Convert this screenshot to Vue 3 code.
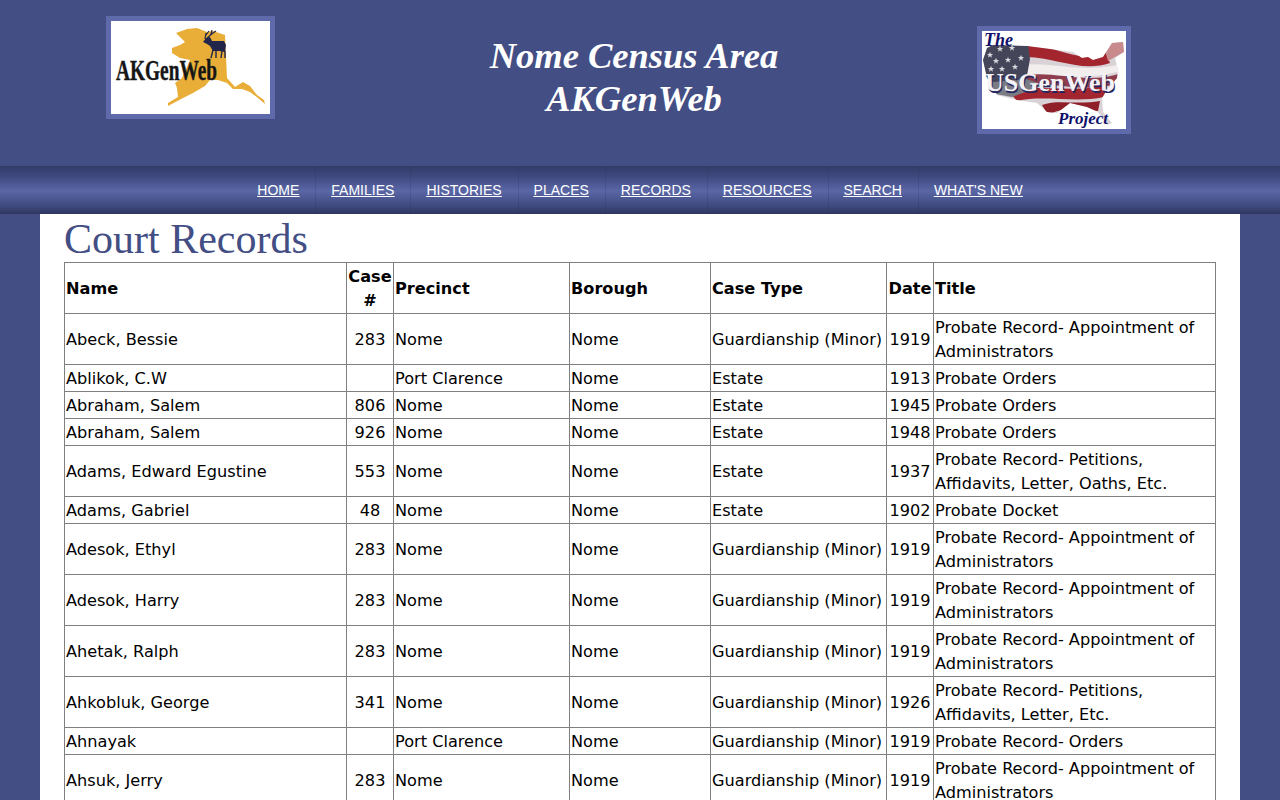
<script setup>
const cols = ['name', 'num', 'prec', 'boro', 'type', 'date', 'title']
const nav = ['HOME', 'FAMILIES', 'HISTORIES', 'PLACES', 'RECORDS', 'RESOURCES', 'SEARCH', "WHAT'S NEW"]
const G = 'Guardianship (Minor)'
const A = 'Probate Record- Appointment of Administrators'
const O = 'Probate Orders'
const rows = [
  ['Abeck, Bessie', '283', 'Nome', G, '1919', A],
  ['Ablikok, C.W', '', 'Port Clarence', 'Estate', '1913', O],
  ['Abraham, Salem', '806', 'Nome', 'Estate', '1945', O],
  ['Abraham, Salem', '926', 'Nome', 'Estate', '1948', O],
  ['Adams, Edward Egustine', '553', 'Nome', 'Estate', '1937', 'Probate Record- Petitions, Affidavits, Letter, Oaths, Etc.'],
  ['Adams, Gabriel', '48', 'Nome', 'Estate', '1902', 'Probate Docket'],
  ['Adesok, Ethyl', '283', 'Nome', G, '1919', A],
  ['Adesok, Harry', '283', 'Nome', G, '1919', A],
  ['Ahetak, Ralph', '283', 'Nome', G, '1919', A],
  ['Ahkobluk, George', '341', 'Nome', G, '1926', 'Probate Record- Petitions, Affidavits, Letter, Etc.'],
  ['Ahnayak', '', 'Port Clarence', G, '1919', 'Probate Record- Orders'],
  ['Ahsuk, Jerry', '283', 'Nome', G, '1919', A],
]
const stars = [[8,24],[18,18],[30,17],[14,30],[26,29],[39,27],[9,38],[20,38],[33,36]]
const starPath = ([x, y]) =>
  `M${x} ${y - 3.2} L${x + 0.9} ${y - 1} L${x + 3.2} ${y - 1} L${x + 1.3} ${y + 0.4} L${x + 2} ${y + 2.7} L${x} ${y + 1.3} L${x - 2} ${y + 2.7} L${x - 1.3} ${y + 0.4} L${x - 3.2} ${y - 1} L${x - 0.9} ${y - 1} Z`
</script>

<template>
  <div class="page">
    <header class="top">
      <div class="logo-cell">
        <div class="logo logo-ak">
          <svg width="159" height="93" viewBox="0 0 159 93">
            <rect width="159" height="93" fill="#fff" />
            <path class="alaska" d="M65 12 L76 8 L86 7 L96 11 L102 10 L114 14 L116 57 L124 66 L132 61 L139 65 L146 74 L153 79 L154 83 L147 77 L139 71 L131 68 L122 68 L116 62 L107 59 L99 59 L94 65 L82 72 L72 77 L57 85 L57 82 L67 76 L66 67 L64 62 L71 57 L79 39 L69 37 L61 32 L61 27 L69 24 L74 21 Z" />
            <path class="antler" d="M94 18 L95 12 M95 14 L98 10 M96 17 L102 12 M99 14 L105 10 M100 13 L101 9" />
            <path class="moose" d="M92 21 L95 17 L99 16 L101 20 L113 20 L115 24 L114 31 L108 30 L102 30 L99 25 L96 23 Z" />
            <path class="moose-legs" d="M102 29 L100 37 M105 30 L105 37 M111 30 L110 37 M114 30 L114 37" />
            <text class="ak-text" x="5" y="59" textLength="101" lengthAdjust="spacingAndGlyphs">AKGenWeb</text>
          </svg>
        </div>
      </div>
      <h2 class="site-title">Nome Census Area<br />AKGenWeb</h2>
      <div class="logo-cell">
        <div class="logo logo-us">
          <svg width="144" height="98" viewBox="0 0 144 98">
            <defs>
              <clipPath id="usmap">
                <path d="M1 29 L5 17 L11 14 L45 15 L91 21 L100 27 L106 26 L111 29 L121 26 L130 12 L141 11 L142 21 L133 27 L136 39 L135 47 L125 59 L120 67 L121 81 L130 92 L125 94 L116 81 L105 76 L88 72 L75 82 L65 81 L55 72 L35 69 L15 64 L5 47 Z" />
              </clipPath>
            </defs>
            <rect width="144" height="98" fill="#fff" />
            <g clip-path="url(#usmap)">
              <rect width="144" height="98" fill="#d9d2d6" />
              <path d="M45 12 C70 14 100 34 124 22 L128 32 C100 42 72 26 45 26 Z" fill="#a3262f" />
              <path d="M120 8 L144 8 L144 20 L126 30 Z" fill="#c98a8e" />
              <path d="M40 34 C70 30 100 44 144 32 L144 38 C105 52 75 42 45 46 Z" fill="#f3eeee" />
              <path d="M45 44 C75 40 105 54 140 42 L130 54 C100 62 70 50 45 54 Z" fill="#8d3d4c" />
              <path d="M25 58 C55 54 95 62 125 54 L122 66 C95 72 60 64 35 70 Z" fill="#a32530" />
              <path d="M60 74 C75 68 95 74 118 70 L116 80 C95 78 80 76 66 84 Z" fill="#8f2029" />
              <path d="M0 10 L46 12 L48 28 L44 50 L0 54 Z" fill="#45455a" />
              <path d="M0 52 L44 48 L62 54 L30 66 L8 62 Z" fill="#7b7b84" />
              <path v-for="s in stars" :key="s.join()" :d="starPath(s)" fill="#d8d8de" />
            </g>
            <text class="the" x="2" y="15">The</text>
            <text class="us-shadow" x="4" y="62">USGenWeb</text>
            <text class="us-text" x="3" y="60">USGenWeb</text>
            <text class="project" x="76" y="93">Project</text>
          </svg>
        </div>
      </div>
    </header>

    <nav class="menu">
      <a v-for="item in nav" :key="item" class="menu-link" href="#"><span>{{ item }}</span></a>
    </nav>

    <main class="content">
      <h1 class="heading">Court Records</h1>
      <table class="records">
        <colgroup>
          <col v-for="c in cols" :key="c" :class="'c-' + c" />
        </colgroup>
        <thead>
          <tr>
            <th>Name</th>
            <th class="mid">Case #</th>
            <th>Precinct</th>
            <th>Borough</th>
            <th>Case Type</th>
            <th class="mid">Date</th>
            <th>Title</th>
          </tr>
        </thead>
        <tbody>
          <tr v-for="(r, i) in rows" :key="i">
            <td>{{ r[0] }}</td>
            <td class="mid">{{ r[1] }}</td>
            <td>{{ r[2] }}</td>
            <td>Nome</td>
            <td>{{ r[3] }}</td>
            <td class="mid">{{ r[4] }}</td>
            <td>{{ r[5] }}</td>
          </tr>
        </tbody>
      </table>
    </main>
  </div>
</template>

<style>
html, body { margin: 0; background: #434e84; }
</style>

<style scoped>
.page { min-height: 800px; background: #434e84; font-family: "DejaVu Sans", Verdana, sans-serif; }
.top {
  height: 166px;
  display: grid;
  grid-template-columns: 381px 506px 334px;
  align-items: start;
  box-sizing: border-box;
}
.logo-cell { display: flex; justify-content: center; }
.logo { border: 5px solid #5f6aab; display: flex; }
.logo-ak { margin-top: 16px; }
.logo-us { margin-top: 26px; }
.site-title {
  margin: 34px 0 0;
  text-align: center;
  color: #fff;
  font: italic 700 36.5px/43px "Liberation Serif", serif;
}
.alaska { fill: #e9ae38; }
.moose { fill: #23264a; }
.antler { fill: none; stroke: #23264a; stroke-width: 1.2; }
.moose-legs { fill: none; stroke: #23264a; stroke-width: 1.4; }
.ak-text { font: 700 29px "Liberation Serif", serif; fill: #161616; stroke: #161616; stroke-width: 0.4; }
.the { font: italic 700 18px "Liberation Serif", serif; fill: #10106a; }
.project { font: italic 700 17px "Liberation Serif", serif; fill: #10106a; }
.us-text { font: 700 26px "Liberation Serif", serif; fill: #f4f2f6; }
.us-shadow { font: 700 26px "Liberation Serif", serif; fill: #1f2560; }

.menu {
  height: 48px;
  display: flex;
  justify-content: center;
  background: linear-gradient(to bottom, #333b66 0%, #3f4980 22%, #5a67a6 52%, #434e85 78%, #2f3760 100%);
}
.menu-link {
  display: flex;
  align-items: center;
  padding: 0 16px;
  color: #fff;
  font: 14px/20px "Liberation Sans", Arial, sans-serif;
  border-right: 1px solid rgba(40, 48, 90, 0.22);
  margin-right: -1px;
}
.menu-link:last-child { border-right: 0; margin-right: 0; }
.menu-link span { text-decoration: underline; }

.content {
  width: 1200px;
  margin: 0 auto;
  box-sizing: border-box;
  min-height: 586px;
  padding: 0 24px;
  background: #fff;
}
.heading {
  margin: 0;
  height: 48px;
  color: #434e84;
  font: 400 42px/50px "Liberation Serif", serif;
}
.records {
  width: 1152px;
  table-layout: fixed;
  border-collapse: collapse;
  font-size: 16.15px;
  line-height: 24px;
  color: #000;
}
.c-name { width: 282px; }
.c-num { width: 47px; }
.c-prec { width: 176px; }
.c-boro { width: 141px; }
.c-type { width: 176px; }
.c-date { width: 47px; }
.records th, .records td {
  border: 1px solid #808080;
  padding: 2px 1px 0;
  text-align: left;
  font-weight: 400;
}
.records th { font-weight: 700; }
.records .mid { text-align: center; }
</style>
